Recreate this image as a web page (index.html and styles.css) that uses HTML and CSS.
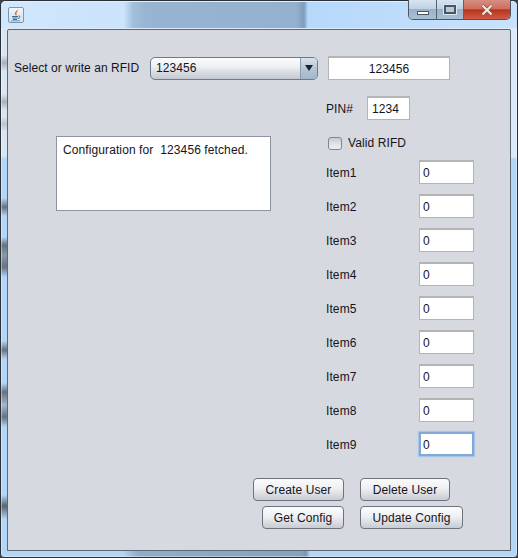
FILE: index.html
```html
<!DOCTYPE html>
<html lang="en">
<head>
    <meta charset="UTF-8">
    <title>RFID Config</title>
    <link rel="stylesheet" href="styles.css">
</head>
<body>

<div class="window">
    <div class="titlebar">
        <div class="app-icon">
            <svg width="14" height="14" viewBox="0 0 14 14">
                <path d="M8 0.5 C9 3 5 4 6 6 C6.5 7 7 7.5 7 8 C8.5 6.5 6.5 5.5 8 4 C8.5 3.5 9 2.5 8 0.5 Z" fill="#e0661c"/>
                <path d="M3 8.5 H9 M3.5 10 H8.5 M4 11.5 H8" stroke="#3f6f9c" stroke-width="1" fill="none"/>
                <path d="M9.5 8 C11.5 7.5 11.5 10 9 10.5" stroke="#3f6f9c" stroke-width="1" fill="none"/>
                <path d="M2 12.8 H11" stroke="#7b9cbb" stroke-width="1"/>
            </svg>
        </div>
        <div class="win-buttons">
            <div class="win-btn btn-min"><span class="glyph-min"></span></div>
            <div class="win-btn btn-max"><span class="glyph-max"></span></div>
            <div class="win-btn btn-close">
                <svg width="14" height="12" viewBox="0 0 14 12">
                    <path d="M2.5 1.5 L11.5 10.5 M11.5 1.5 L2.5 10.5" stroke="#8c4a3e" stroke-width="3.4"/>
                    <path d="M2.5 1.5 L11.5 10.5 M11.5 1.5 L2.5 10.5" stroke="#ece9e6" stroke-width="2.2"/>
                </svg>
            </div>
        </div>
    </div>

    <div class="client">
        <div class="rfid-row">
            <label class="rfid-label">Select or write an RFID</label>
            <div class="combo">
                <span class="combo-value">123456</span>
                <span class="combo-arrow"><span class="arrow-down"></span></span>
            </div>
            <input class="field rfid-field" type="text" value="123456">
        </div>

        <div class="main">
            <div class="left">
                <div class="message">Configuration for&nbsp; 123456 fetched.</div>
            </div>
            <div class="right">
                <div class="pin-row">
                    <label class="pin-label">PIN#</label>
                    <input class="field pin-field" type="text" value="1234">
                </div>
                <div class="check-row">
                    <span class="check"></span>
                    <label>Valid RIFD</label>
                </div>
                <div class="item-row"><label>Item1</label><input class="field item-field" type="text" value="0"></div>
                <div class="item-row"><label>Item2</label><input class="field item-field" type="text" value="0"></div>
                <div class="item-row"><label>Item3</label><input class="field item-field" type="text" value="0"></div>
                <div class="item-row"><label>Item4</label><input class="field item-field" type="text" value="0"></div>
                <div class="item-row"><label>Item5</label><input class="field item-field" type="text" value="0"></div>
                <div class="item-row"><label>Item6</label><input class="field item-field" type="text" value="0"></div>
                <div class="item-row"><label>Item7</label><input class="field item-field" type="text" value="0"></div>
                <div class="item-row"><label>Item8</label><input class="field item-field" type="text" value="0"></div>
                <div class="item-row"><label>Item9</label><input class="field item-field focused" type="text" value="0"></div>
            </div>
        </div>

        <div class="button-row row-one">
            <button class="btn create">Create User</button>
            <button class="btn delete">Delete User</button>
        </div>
        <div class="button-row row-two">
            <button class="btn get">Get Config</button>
            <button class="btn update">Update Config</button>
        </div>
    </div>
</div>

</body>
</html>
```

FILE: styles.css
```css
html, body {
    margin: 0;
    padding: 0;
}
body {
    width: 518px;
    height: 558px;
    overflow: hidden;
    background: #3a4148;
    font-family: "Liberation Sans", Arial, sans-serif;
    font-size: 12px;
    letter-spacing: 0.1px;
    color: #14141e;
}
.window {
    box-sizing: border-box;
    width: 518px;
    height: 558px;
    padding: 0 6px;
    border: 1px solid #2a2f35;
    border-radius: 6px 6px 4px 4px;
    box-shadow: inset 0 0 0 1px rgba(255, 255, 255, 0.4);
    background-color: #b3d5f8;
    background-repeat: no-repeat;
    background-image:
        linear-gradient(to bottom,
            #d8e5f3 0, #d8e5f3 54px, #a9b2bc 62px, #d8e5f3 70px,
            #d8e5f3 93px, #a9b2bc 101px, #d8e5f3 109px,
            #d8e5f3 116px, #bcc5cf 123px, #d8e5f3 130px,
            #d8e5f3 155px, #b3d5f8 158px,
            #b3d5f8 197px, #66727f 206px, #b3d5f8 215px,
            #b3d5f8 236px, #66727f 244px, #8b98a6 254px, #66727f 266px, #b3d5f8 276px,
            #b3d5f8 340px, #66727f 349px, #b3d5f8 358px,
            #b3d5f8 382px, #66727f 391px, #a5b8cc 404px, #66727f 416px, #b3d5f8 426px,
            #b3d5f8 494px, #59636e 505px, #b3d5f8 518px, #b3d5f8 100%),
        linear-gradient(to bottom, #dbe9fa 0, #dbe9fa 156px, #b3d5f8 158px, #b3d5f8 100%),
        linear-gradient(to right,
            #b3d5f8 0, #b3d5f8 122px, #8fadc9 137px, #86a3be 300px, #7a95ae 305px, #b3d5f8 309px, #b3d5f8 100%);
    background-size: 6px 100%, 6px 100%, 100% 6px;
    background-position: 0 0, 100% 0, 0 100%;
    display: flex;
    flex-direction: column;
}
.titlebar {
    box-sizing: border-box;
    flex: none;
    height: 28px;
    margin: 0 -6px;
    padding-left: 7px;
    display: flex;
    justify-content: space-between;
    align-items: flex-start;
    border-top: 1px solid #e6f0fa;
    border-bottom: 1px solid #dcebfb;
    border-radius: 5px 5px 0 0;
    background: linear-gradient(to right, #d0e7fd 0, #cbe3fb 123px, #a3bfdb 132px, #97b4d2 145px, #94b1cf 295px, #7f9cba 303px, #b6d8fb 307px, #c8e2fd 100%);
}
.app-icon {
    box-sizing: border-box;
    width: 16px;
    height: 16px;
    margin-top: 5px;
    border: 1px solid #7f97ad;
    border-radius: 2px;
    background: linear-gradient(to bottom, #f0f5fa 0, #d3e0ec 100%);
    display: flex;
    align-items: center;
    justify-content: center;
}
.win-buttons {
    display: flex;
    height: 19px;
    margin-top: -2px;
    margin-right: 6px;
    border: 1px solid #4c5560;
    border-top: none;
    border-radius: 0 0 5px 5px;
    overflow: hidden;
}
.win-btn {
    display: flex;
    align-items: center;
    justify-content: center;
    height: 100%;
}
.btn-min {
    width: 27px;
    border-right: 1px solid #59636e;
    background: linear-gradient(to bottom, #d5e4f2 0, #c0d2e4 45%, #9bb1c7 50%, #a9bfd4 100%);
}
.btn-max {
    width: 26px;
    background: linear-gradient(to bottom, #d5e4f2 0, #c0d2e4 45%, #9bb1c7 50%, #a9bfd4 100%);
}
.btn-close {
    width: 46px;
    border-left: 1px solid #59636e;
    background: linear-gradient(to bottom, #d58f82 0, #cf6f5e 45%, #b9341f 52%, #cf5a42 100%);
}
.glyph-min {
    display: block;
    width: 10px;
    height: 2px;
    margin-top: 6px;
    border: 1px solid #4a5562;
    background: #fff;
}
.glyph-max {
    display: block;
    box-sizing: border-box;
    width: 12px;
    height: 9px;
    border: 2px solid #4a5562;
    outline: 1px solid #dbe7f2;
    background: #b8cadb;
}
.client {
    box-sizing: border-box;
    flex: none;
    height: 522px;
    border: 1px solid #5e6873;
    border-radius: 2px 2px 0 0;
    background: #d6d9e0;
    padding: 26px 0 0 6px;
}
.rfid-row {
    display: flex;
    align-items: center;
    height: 24px;
}
.rfid-label {
    width: 136px;
    letter-spacing: 0.05px;
}
.combo {
    box-sizing: border-box;
    width: 168px;
    height: 23px;
    border: 1px solid #6b7a8c;
    border-radius: 5px;
    display: flex;
    justify-content: space-between;
    background: linear-gradient(to bottom, #fcfcfd 0, #eef0f3 40%, #d4d8de 75%, #c3c8d0 100%);
    overflow: hidden;
}
.combo-value {
    padding-left: 5px;
    line-height: 21px;
}
.combo-arrow {
    width: 16px;
    border-left: 1px solid #8a9aad;
    background: linear-gradient(to bottom, #d9e2ec 0, #b6c6d8 50%, #a3b6cb 100%);
    display: flex;
    align-items: center;
    justify-content: center;
}
.arrow-down {
    border-left: 4px solid transparent;
    border-right: 4px solid transparent;
    border-top: 6px solid #1c222a;
}
.field {
    box-sizing: border-box;
    height: 24px;
    margin: 0;
    padding: 0 3px;
    background: #fff;
    border: 1px solid #b4b4b4;
    border-top: 2px solid #b4b4b4;
    font-family: inherit;
    font-size: 12px;
    letter-spacing: 0.1px;
    color: #14141e;
    outline: none;
}
.rfid-field {
    width: 122px;
    margin-left: 10px;
    text-align: center;
}
.main {
    display: flex;
    margin-top: 16px;
}
.left {
    width: 312px;
    padding-top: 40px;
}
.message {
    box-sizing: border-box;
    width: 215px;
    height: 75px;
    margin-left: 42px;
    padding: 6px;
    background: #fff;
    border: 1px solid #8e95a2;
}
.pin-row {
    display: flex;
    align-items: center;
    height: 24px;
}
.pin-label {
    width: 41px;
    padding-top: 1px;
}
.pin-field {
    width: 43px;
    padding: 1px 3px 0 4px;
}
.check-row {
    display: flex;
    align-items: center;
    height: 14px;
    margin-top: 16px;
    margin-bottom: 10px;
    padding-left: 2px;
}
.check {
    box-sizing: border-box;
    width: 14px;
    height: 13px;
    margin-right: 6px;
    border: 1px solid #7c8694;
    border-radius: 3px;
    background: linear-gradient(to bottom, #c6cbd3 0, #e4e6ea 60%, #eceef1 100%);
}
.item-row {
    display: flex;
    align-items: center;
    height: 24px;
    margin-bottom: 10px;
}
.item-row label {
    width: 93px;
    padding-top: 1px;
}
.item-field {
    width: 55px;
    padding-top: 1px;
}
.focused {
    border: 2px solid #82a8d8;
    padding-left: 2px;
    box-shadow: 0 0 1px 1px #a8c4e6;
}
.button-row {
    display: flex;
    gap: 16px;
}
.row-one {
    margin-top: 12px;
    padding-left: 239px;
}
.row-two {
    margin-top: 5px;
    padding-left: 248px;
}
.btn {
    box-sizing: border-box;
    height: 23px;
    padding: 1px 0 0;
    border: 1px solid #6e737b;
    border-radius: 4px;
    background: linear-gradient(to bottom, #fbfbfc 0, #eef0f3 45%, #d5d8de 80%, #c8ccd3 100%);
    font-family: inherit;
    font-size: 12px;
    letter-spacing: 0.1px;
    color: #14141e;
}
.create { width: 91px; }
.delete { width: 90px; }
.get { width: 82px; }
.update { width: 103px; }
```
